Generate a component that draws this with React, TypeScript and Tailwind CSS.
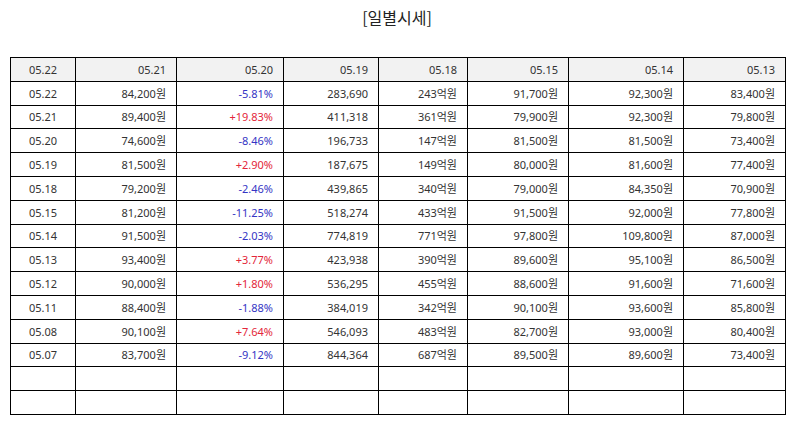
const header = ['05.22', '05.21', '05.20', '05.19', '05.18', '05.15', '05.14', '05.13'];

const rows: string[][] = [
  ['05.22', '84,200원', '-5.81%', '283,690', '243억원', '91,700원', '92,300원', '83,400원'],
  ['05.21', '89,400원', '+19.83%', '411,318', '361억원', '79,900원', '92,300원', '79,800원'],
  ['05.20', '74,600원', '-8.46%', '196,733', '147억원', '81,500원', '81,500원', '73,400원'],
  ['05.19', '81,500원', '+2.90%', '187,675', '149억원', '80,000원', '81,600원', '77,400원'],
  ['05.18', '79,200원', '-2.46%', '439,865', '340억원', '79,000원', '84,350원', '70,900원'],
  ['05.15', '81,200원', '-11.25%', '518,274', '433억원', '91,500원', '92,000원', '77,800원'],
  ['05.14', '91,500원', '-2.03%', '774,819', '771억원', '97,800원', '109,800원', '87,000원'],
  ['05.13', '93,400원', '+3.77%', '423,938', '390억원', '89,600원', '95,100원', '86,500원'],
  ['05.12', '90,000원', '+1.80%', '536,295', '455억원', '88,600원', '91,600원', '71,600원'],
  ['05.11', '88,400원', '-1.88%', '384,019', '342억원', '90,100원', '93,600원', '85,800원'],
  ['05.08', '90,100원', '+7.64%', '546,093', '483억원', '82,700원', '93,000원', '80,400원'],
  ['05.07', '83,700원', '-9.12%', '844,364', '687억원', '89,500원', '89,600원', '73,400원'],
  ['', '', '', '', '', '', '', ''],
  ['', '', '', '', '', '', '', ''],
];

const widths = ['w-[65px]', 'w-[101px]', 'w-[107px]', 'w-[95px]', 'w-[89px]', 'w-[101px]', 'w-[115px]', 'w-[102px]'];

export default function App() {
  const cellClass = 'border border-black h-[23.8px] p-0 align-middle';

  const colorOf = (v: string) => {
    if (v.startsWith('+')) return 'text-[#e3263a]';
    if (v.startsWith('-')) return 'text-[#3535c4]';
    return '';
  };

  return (
    <div className="w-[794px] h-[425px] bg-white px-[10px] pt-[6px] text-[#333] font-['Noto_Sans','Noto_Sans_CJK_KR',sans-serif]">
      <div className="h-[22px] flex items-center justify-center text-[16px] text-[#222] font-['Noto_Sans_CJK_KR',sans-serif]">
        [일별시세]
      </div>

      <table className="mt-[29px] w-[775px] table-fixed border-collapse text-[11px] leading-none">
        <colgroup>
          {widths.map((w, i) => <col key={i} className={w} />)}
        </colgroup>
        <thead>
          <tr className="bg-[#f2f2f2]">
            {header.map((h, i) => (
              <th key={i} className={`${cellClass} font-normal ${i === 0 ? 'text-center' : 'text-right pr-[10px]'}`}>{h}</th>
            ))}
          </tr>
        </thead>
        <tbody>
          {rows.map((r, ri) => (
            <tr key={ri}>
              {r.map((v, ci) => (
                <td key={ci} className={`${cellClass} ${ci === 0 ? 'text-center' : 'text-right pr-[10px]'} ${ci === 2 ? colorOf(v) : ''}`}>{v}</td>
              ))}
            </tr>
          ))}
        </tbody>
      </table>
    </div>
  );
}
